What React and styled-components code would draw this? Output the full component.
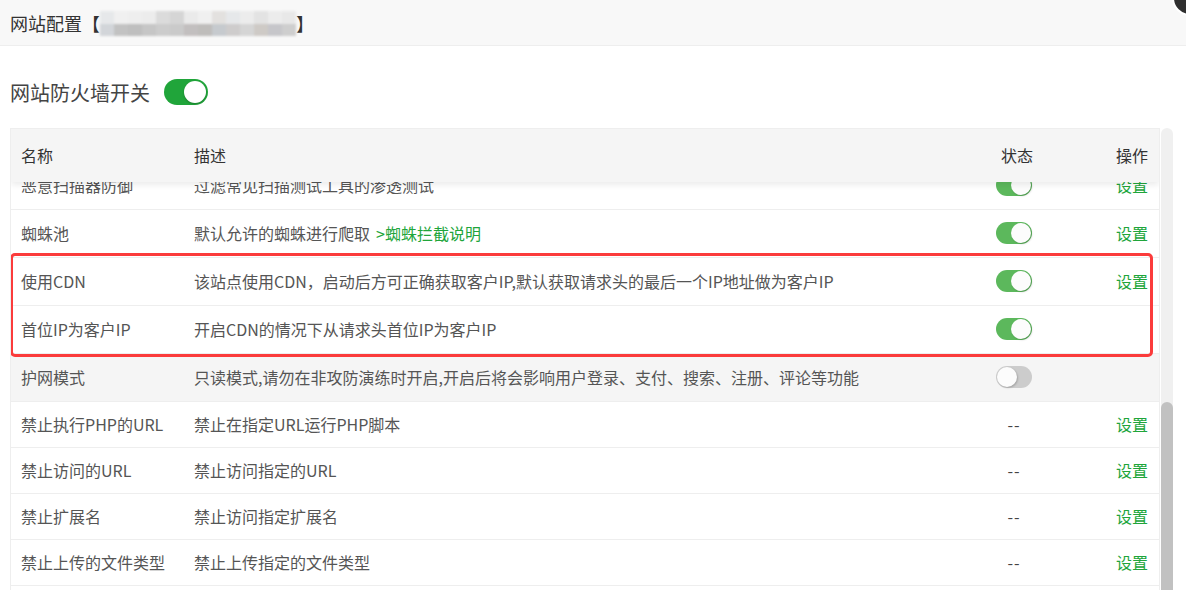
import React from "react";
import styled, { createGlobalStyle } from "styled-components";

const Global = createGlobalStyle`
  html, body {
    margin: 0;
    padding: 0;
    background: #fff;
    overflow: hidden;
    height: 590px;
  }
  body {
    font-family: "Noto Sans CJK SC", "Microsoft YaHei", "Liberation Sans", sans-serif;
    color: #555;
  }
`;

const Layer = styled.div`
  position: relative;
  width: 1186px;
  height: 590px;
  overflow: hidden;
  background: #fff;
`;

const TitleBar = styled.div`
  height: 45px;
  border-bottom: 1px solid #eee;
  background: #f8f8f8;
  display: flex;
  align-items: center;
  padding: 0 10px;
  font-size: 18px;
  color: #333;
`;

const Bracket = styled.span`
  display: inline-block;
  line-height: 1;
`;

const Blur = styled.div`
  display: grid;
  grid-template-columns: repeat(14, 1fr);
  grid-template-rows: 13px 12px;
  width: 196px;
  margin: 1px 0 0;
  filter: blur(1.2px);
  opacity: 0.95;
`;

const BlurCell = styled.div`
  background: ${({ $c }) => $c};
`;

const CloseDot = styled.div`
  position: absolute;
  top: -20px;
  right: -22px;
  width: 32px;
  height: 32px;
  border-radius: 50%;
  background: #2f2f2f;
  border: 2px solid #fff;
`;

const Content = styled.div`
  padding: 0 10px;
`;

const SwitchRow = styled.div`
  display: flex;
  align-items: center;
  gap: 14px;
  margin-top: 33px;
  height: 26px;
  font-size: 20px;
  color: #444;
`;

const BigToggle = styled.div`
  width: 44px;
  height: 26px;
  border-radius: 13px;
  background: #20a53a;
  position: relative;
  box-sizing: border-box;
  &::after {
    content: "";
    position: absolute;
    top: 2px;
    right: 2px;
    width: 22px;
    height: 22px;
    border-radius: 50%;
    background: #fff;
    box-shadow: 0 1px 2px rgba(0, 0, 0, 0.25);
  }
`;

const TableArea = styled.div`
  display: flex;
  margin-top: 23px;
  height: 470px;
`;

const TableFrame = styled.div`
  width: 1150px;
  box-sizing: border-box;
  border: 1px solid #eee;
  border-bottom: none;
  overflow: hidden;
  font-size: 16px;
`;

const cols = "173px 1fr 110px 90px";

const HeadRow = styled.div`
  position: relative;
  z-index: 2;
  display: grid;
  grid-template-columns: ${cols};
  align-items: center;
  height: 53px;
  background: #f5f5f5;
  color: #333;
  box-shadow: 0 3px 6px rgba(0, 0, 0, 0.08);
`;

const Body = styled.div`
  margin-top: -20px;
`;

const Row = styled.div`
  display: grid;
  grid-template-columns: ${cols};
  align-items: center;
  border-bottom: 1px solid #eee;
  background: ${({ $hover }) => ($hover ? "#f5f5f5" : "#fff")};
`;

const Cell = styled.div`
  padding: 12px 10px;
  line-height: 21px;
  white-space: nowrap;
  display: flex;
  align-items: center;
  justify-content: ${({ $align }) =>
    $align === "center" ? "center" : $align === "right" ? "flex-end" : "flex-start"};
  ${({ $align }) => $align === "center" && "padding-left: 0; padding-right: 0;"}
  ${({ $align }) => $align === "right" && "padding-right: 11px;"}
`;

const HeadCell = styled(Cell)`
  padding-top: 0;
  padding-bottom: 0;
  ${({ $align }) => $align === "center" && "padding-left: 6px;"}
`;

const Highlight = styled.div`
  position: relative;
  &::after {
    content: "";
    position: absolute;
    top: -5px;
    bottom: -3px;
    left: -1px;
    right: 6px;
    border: 3px solid #fb3b3b;
    border-radius: 5px;
    z-index: 1;
    pointer-events: none;
  }
`;

const Toggle = styled.div`
  width: 36px;
  height: 22px;
  margin-bottom: 1px;
  border-radius: 11px;
  position: relative;
  background: ${({ $on }) => ($on ? "#5cb85c" : "#ccc")};
  &::after {
    content: "";
    position: absolute;
    top: 1px;
    ${({ $on }) => ($on ? "right: 1px;" : "left: 1px;")}
    width: 20px;
    height: 20px;
    border-radius: 50%;
    background: #fcfcfc;
    box-shadow: 1px 1px 2px rgba(0, 0, 0, 0.2);
  }
`;

const GreenLink = styled.span`
  color: #20a53a;
  margin-left: ${({ $gap }) => ($gap ? "6px" : "0")};
  cursor: pointer;
`;

const Dash = styled.span`
  color: #444;
  letter-spacing: 1px;
`;

const ScrollTrack = styled.div`
  width: 12px;
  margin-left: 1px;
  background: #f0f0f0;
  border-radius: 6px 6px 0 0;
  overflow: hidden;
`;

const ScrollThumb = styled.div`
  margin-top: 274px;
  height: 300px;
  background: #c1c1c1;
  border-radius: 6px;
`;

const blurTop = ["#e6e8ea", "#f0f0f0", "#eeeeee", "#ececec", "#dadada", "#d4d4d4", "#eaeaea", "#f0f0f0", "#e2e0de", "#e6e8ea", "#ececec", "#e2e2e2", "#ececec", "#e8e8e8"];
const blurBottom = ["#d0d4d8", "#c0c0c0", "#bcbcbc", "#c4c4c4", "#cacaca", "#c8c8c8", "#c0bcbc", "#bcbab8", "#c4c8cc", "#cccaca", "#d4d4d4", "#ccc8c4", "#c4c4c8", "#cccccc"];

const rows = [
  { name: "恶意扫描器防御", desc: "过滤常见扫描测试工具的渗透测试", status: "on", set: true },
  { name: "蜘蛛池", desc: "默认允许的蜘蛛进行爬取", link: ">蜘蛛拦截说明", status: "on", set: true },
  { name: "使用CDN", desc: "该站点使用CDN，启动后方可正确获取客户IP,默认获取请求头的最后一个IP地址做为客户IP", status: "on", set: true, mark: true },
  { name: "首位IP为客户IP", desc: "开启CDN的情况下从请求头首位IP为客户IP", status: "on", set: false, mark: true },
  { name: "护网模式", desc: "只读模式,请勿在非攻防演练时开启,开启后将会影响用户登录、支付、搜索、注册、评论等功能", status: "off", set: false, hover: true },
  { name: "禁止执行PHP的URL", desc: "禁止在指定URL运行PHP脚本", status: "none", set: true },
  { name: "禁止访问的URL", desc: "禁止访问指定的URL", status: "none", set: true },
  { name: "禁止扩展名", desc: "禁止访问指定扩展名", status: "none", set: true },
  { name: "禁止上传的文件类型", desc: "禁止上传指定的文件类型", status: "none", set: true },
];

const RuleRow = ({ r }) => (
  <Row $hover={r.hover}>
    <Cell>{r.name}</Cell>
    <Cell>
      {r.desc}
      {r.link && <GreenLink $gap>{r.link}</GreenLink>}
    </Cell>
    <Cell $align="center">
      {r.status === "none" ? <Dash>--</Dash> : <Toggle $on={r.status === "on"} />}
    </Cell>
    <Cell $align="right">{r.set && <GreenLink>设置</GreenLink>}</Cell>
  </Row>
);

export default function App() {
  const before = rows.filter((r, i) => i < 2);
  const marked = rows.filter((r) => r.mark);
  const after = rows.filter((r, i) => i > 3);
  return (
    <Layer>
      <Global />
      <CloseDot />
      <TitleBar>
        网站配置<Bracket>【</Bracket>
        <Blur>
          {blurTop.map((c, i) => (
            <BlurCell key={"t" + i} $c={c} />
          ))}
          {blurBottom.map((c, i) => (
            <BlurCell key={"b" + i} $c={c} />
          ))}
        </Blur>
        <Bracket>】</Bracket>
      </TitleBar>
      <Content>
        <SwitchRow>
          网站防火墙开关
          <BigToggle />
        </SwitchRow>
        <TableArea>
          <TableFrame>
            <HeadRow>
              <HeadCell>名称</HeadCell>
              <HeadCell>描述</HeadCell>
              <HeadCell $align="center">状态</HeadCell>
              <HeadCell $align="right">操作</HeadCell>
            </HeadRow>
            <Body>
              {before.map((r) => (
                <RuleRow key={r.name} r={r} />
              ))}
              <Highlight>
                {marked.map((r) => (
                  <RuleRow key={r.name} r={r} />
                ))}
              </Highlight>
              {after.map((r) => (
                <RuleRow key={r.name} r={r} />
              ))}
            </Body>
          </TableFrame>
          <ScrollTrack>
            <ScrollThumb />
          </ScrollTrack>
        </TableArea>
      </Content>
    </Layer>
  );
}
